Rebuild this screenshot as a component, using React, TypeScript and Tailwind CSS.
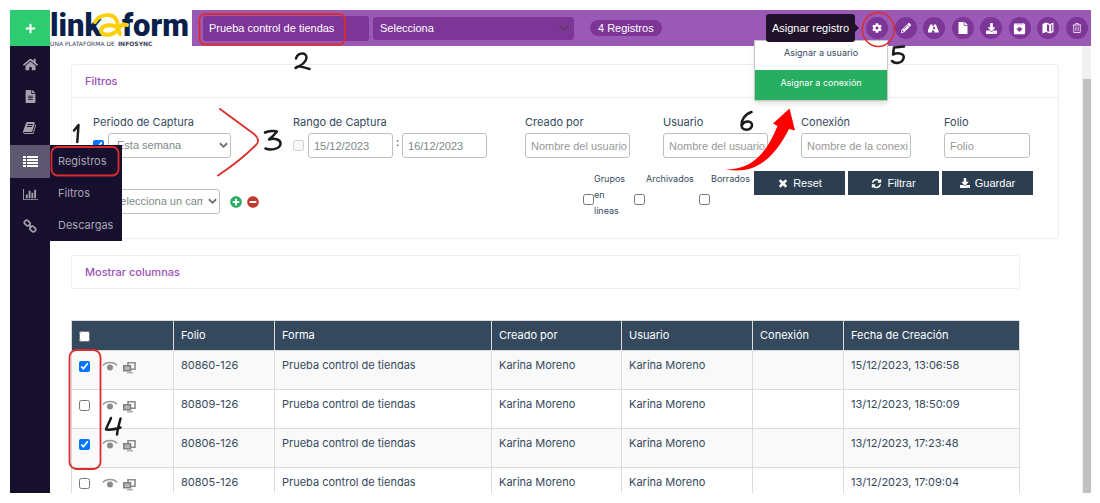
import React from "react";
import type { ReactNode } from "react";
import { FaCog, FaPencilAlt, FaFile, FaDownload, FaHome, FaFileAlt, FaPlus, FaPlusCircle, FaMinusCircle, FaChevronDown, FaRegTrashAlt } from "react-icons/fa";
import { MdArchive } from "react-icons/md";

type GlyphProps = { d: string; box?: string; className: string };

function Glyph({ d, box = "0 0 1792 1792", className }: GlyphProps) {
  return (
    <svg viewBox={box} className={className} fill="currentColor" aria-hidden="true">
      <path d={d} />
    </svg>
  );
}

const BOOK =
  "M1639 478q40 57 18 129l-275 906q-19 64-76.5 107.5t-122.5 43.5h-923q-77 0-148.5-53.5t-99.5-131.5q-24-67-2-127 0-4 3-27t4-37q1-8-3-21.5t-3-19.5q2-11 8-21t16.5-23.5 16.5-23.5q23-38 45-91.5t30-91.5q3-10 .5-30t-.5-28q3-11 17-28t17-23q21-36 42-92t25-90q1-9-2.5-32t.5-28q4-13 22-30.5t22-22.5q19-26 42.5-84.5t27.5-96.5q1-8-3-25.5t-2-26.5q2-8 9-18t18-23 17-21q8-12 16.5-30.5t15-35 16-36 19.5-32 26.5-23.5 36-11.5 47.5 5.5l-1 3q38-9 51-9h761q74 0 114 56t18 130l-274 906q-36 119-71.5 153.5t-128.5 34.5h-869q-27 0-38 15-11 16-1 43 24 70 144 70h923q29 0 56-15.5t35-41.5l300-987q7-22 5-57 38 15 59 43zm-1064 2q-4 13 2 22.5t20 9.5h608q13 0 25.5-9.5t16.5-22.5l21-64q4-13-2-22.5t-20-9.5h-608q-13 0-25.5 9.5t-16.5 22.5zm-83 256q-4 13 2 22.5t20 9.5h608q13 0 25.5-9.5t16.5-22.5l21-64q4-13-2-22.5t-20-9.5h-608q-13 0-25.5 9.5t-16.5 22.5z";
const REFRESH =
  "M1639 1056q0 5-1 7-64 268-268 434.5t-478 166.5q-146 0-282.5-55t-243.5-157l-129 129q-19 19-45 19t-45-19-19-45v-448q0-26 19-45t45-19h448q26 0 45 19t19 45-19 45l-137 137q71 66 161 102t187 36q134 0 250-65t186-179q11-17 53-117 8-23 30-23h192q13 0 22.5 9.5t9.5 22.5zm25-800v448q0 26-19 45t-45 19h-448q-26 0-45-19t-19-45 19-45l138-138q-148-137-349-137-134 0-250 65t-186 179q-11 17-53 117-8 23-30 23h-199q-13 0-22.5-9.5t-9.5-22.5v-7q65-268 270-434.5t480-166.5q146 0 284 55.5t245 156.5l130-129q19-19 45-19t45 19 19 45z";
const TIMES =
  "M1490 1322q0 40-28 68l-136 136q-28 28-68 28t-68-28l-294-294-294 294q-28 28-68 28t-68-28l-136-136q-28-28-28-68t28-68l294-294-294-294q-28-28-28-68t28-68l136-136q28-28 68-28t68 28l294 294 294-294q28-28 68-28t68 28l136 136q28 28 28 68t-28 68l-294 294 294 294q28 28 28 68z";
const CHART =
  "M640 896v512h-256v-512h256zm384-512v1024h-256v-1024h256zm1024 1152v128h-2048v-1536h128v1408h1920zm-640-896v768h-256v-768h256zm384-384v1152h-256v-1152h256z";
const ROAD =
  "M1111 1061v-4l-24-320q-1-13-11-22.5t-23-9.5h-186q-13 0-23 9.5t-11 22.5l-24 320v4q-1 12 8 20t21 8h244q12 0 21-8t8-20zm622 467q0 73-46 73h-704q13 0 22-9.5t8-22.5l-20-256q-1-13-11-22.5t-23-9.5h-272q-13 0-23 9.5t-11 22.5l-20 256q-1 13 8 22.5t22 9.5h-704q-46 0-46-73 0-54 26-116l417-1044q8-19 26-33t38-14h339q-13 0-23 9.5t-11 22.5l-15 192q-1 14 8 23t22 9h166q13 0 22-9t8-23l-15-192q-1-13-11-22.5t-23-9.5h339q20 0 38 14t26 33l417 1044q26 62 26 116z";
const LIST = "M0 0h3v2H0zM4 0h11v2H4zM0 3h3v2H0zM4 3h11v2H4zM0 6h3v2H0zM4 6h11v2H4zM0 9h3v2H0zM4 9h11v2H4z";

const FIELD =
  "h-[25px] w-full rounded-[3px] border border-[#bfbfbf] bg-white pr-px pl-[5px] font-['Liberation_Sans',sans-serif] text-[11px] text-[#7b8a8b] placeholder:text-[#999]";
const SELECT =
  "h-[25px] w-full appearance-none rounded-[3px] border border-[#bfbfbf] bg-white pr-[16px] font-['Liberation_Sans',sans-serif] text-[11px] text-[#7b8a8b]";

function SmallChevron() {
  return (
    <svg viewBox="0 0 10 7" className="pointer-events-none absolute top-[9px] right-[3px] h-[7px] w-[9px]" fill="none" stroke="#6b6b6b" strokeWidth="2">
      <path d="M1 1l4 4 4-4" />
    </svg>
  );
}

function Field({ id, label, placeholder, className }: { id: string; label: string; placeholder: string; className: string }) {
  return (
    <div className={className}>
      <label htmlFor={id} className="block h-[19px] leading-[16px]">{label}</label>
      <input id={id} placeholder={placeholder} className={FIELD} />
    </div>
  );
}

function NavItem({ label, active, children }: { label: string; active?: boolean; children: ReactNode }) {
  return (
    <a
      href="#"
      aria-label={label}
      className={active ? "mt-px flex h-[33px] items-center justify-center bg-[#5d5870] text-white" : "flex h-[32px] items-center justify-center text-[#a5a2ad]"}
    >
      {children}
    </a>
  );
}

function Tool({ label, children }: { label: string; children: ReactNode }) {
  return (
    <button aria-label={label} className="flex size-[22px] shrink-0 items-center justify-center rounded-full bg-[#7d3598] text-white">
      {children}
    </button>
  );
}

function ChainIcon() {
  return (
    <svg viewBox="0 0 14 14" className="size-[14px]" fill="none" stroke="currentColor" strokeWidth="1.7" aria-hidden="true">
      <rect x="1.2" y="1.8" width="6" height="4.4" rx="2" transform="rotate(45 4.2 4)" />
      <rect x="6.8" y="7.8" width="6" height="4.4" rx="2" transform="rotate(45 9.8 10)" />
      <path d="M5.6 5.4l2.8 3.2" />
    </svg>
  );
}

function MapIcon() {
  return (
    <svg viewBox="0 0 12 12" className="size-[12px]" aria-hidden="true">
      <path d="M.5 2L4 .6 8 2l3.5-1.4V10L8 11.4 4 10 .5 11.4z" fill="#fff" />
      <path d="M5 2.2l2.2.8v6.9L5 9.1zM9.2 2.7l1.1-.4v6.9l-1.1.4z" fill="#7d3598" />
    </svg>
  );
}

function Logo() {
  return (
    <div role="img" aria-label="linkaform" className="relative flex h-[37px] w-[142px] shrink-0 flex-col bg-white text-[#0b1f4b]">
      <div className="flex h-[30px] justify-between pr-[3px] font-['Roboto',sans-serif] text-[31px] leading-[32px] font-black">
        <span>link</span>
        <span>form</span>
      </div>
      <svg viewBox="0 0 44 30" className="absolute top-0 left-[38px] h-[30px] w-[44px]" fill="none" stroke="#ffcf0a" strokeWidth="4" strokeLinecap="round" aria-hidden="true">
        <path d="M7 12C12 4 25 2 29 11C30 15 30 20 32 24" />
        <path d="M29 17C23 14 14 15 13 20C13 27 26 26 30 19C32 15 35 14 39 15" />
      </svg>
      <div className="flex gap-[3px] font-['DejaVu_Sans',sans-serif] text-[6px] leading-[7px] whitespace-nowrap text-[#39425c]">
        <span>UNA PLATAFORMA DE</span>
        <b>INFOSYNC</b>
      </div>
    </div>
  );
}

function RowIcons() {
  return (
    <span className="flex items-center gap-[5px]">
      <svg viewBox="0 0 16 12" className="h-[12px] w-[16px]" fill="none" aria-hidden="true">
        <path d="M1 4.5C4 .6 12 .6 15 4.5" stroke="#999" strokeWidth="1.5" />
        <circle cx="8" cy="6.5" r="3" fill="#8a8a8a" />
      </svg>
      <svg viewBox="0 0 13 12" className="mt-[3px] h-[12px] w-[13px]" aria-hidden="true">
        <path d="M5 .8h7v6.400H5z" fill="#fff" stroke="#8a8a8a" strokeWidth="1.6" />
        <path d="M.8 3.800h6.700v5H.8z" fill="#b5b5b5" stroke="#808080" strokeWidth="1.6" />
        <path d="M4 10h6v1.500H4z" fill="#b0b0b0" />
      </svg>
    </span>
  );
}

const ROWS = [
  { folio: "80860-126", date: "15/12/2023, 13:06:58", on: true },
  { folio: "80809-126", date: "13/12/2023, 18:50:09", on: false },
  { folio: "80806-126", date: "13/12/2023, 17:23:48", on: true },
  { folio: "80805-126", date: "13/12/2023, 17:09:04", on: false },
];

const CELL = "border border-[#dcdcdc] px-[7px] pt-[8px] align-top font-normal";

function Annotations() {
  return (
    <svg viewBox="0 0 1100 503" className="pointer-events-none absolute top-0 left-0 z-30 h-[503px] w-[1100px]" fill="none" strokeLinecap="round" strokeLinejoin="round" aria-hidden="true">
      <g stroke="#dc2c2c" strokeWidth="1.8">
        <rect x="199.5" y="14" width="145.5" height="30.5" rx="6" />
        <rect x="51.5" y="147" width="67" height="28.5" rx="6" />
        <rect x="69.5" y="350" width="31" height="119" rx="7" />
        <ellipse cx="878.3" cy="29.5" rx="16" ry="17" strokeWidth="1.5" />
        <path d="M220 109L254 134Q261 140 256 145Q240 161 218 175.5" />
      </g>
      <g stroke="#1b1b1b" strokeWidth="2.5">
        <path d="M74 130.5L78.5 125L77.3 142" />
        <path d="M296 58.5C298 52 307 52 306.5 58C306 63 300 66 295.5 68C299 64.5 303 67.5 309.5 69" />
        <path d="M265 132.5C269 131 275 130.5 277 131.5C275 134 272 137 269 139.5C275 137.5 281 140 280.5 144C280 149 271 150.5 265.5 148.5" />
        <path d="M111 418C109 423 106.5 427 106 429.5C111 430 116 429 120.5 427.5M120.5 418.5C119 424 117.5 430 117 434.5" />
        <path d="M904 46.5L894 47.5L893 54.5C899 52 905 54 903.5 58.5C902 63.5 895 64 892 61" />
        <path d="M751.5 112C745 114 741 120 741.5 125.5C742 131 751 131 752 125.5C752.5 120.5 744.5 120 742 125" />
      </g>
      <path d="M725.5 169.5C752 169.5 766 154 777.5 126L773 123.5L789.5 108.500L795 130.500L789 129C774 158 756 175 725.5 169.5z" fill="#f00" />
    </svg>
  );
}

export default function App() {
  return (
    <div className="relative h-screen overflow-hidden bg-white py-[10px] pr-[9px] pl-[10px] font-['Inter',sans-serif] text-[11px] text-[#34495e]">
      <div className="flex h-full">
        <aside className="relative z-20 w-[40px] shrink-0 bg-[#170f2e]">
          <button aria-label="Nuevo" className="flex h-[36px] w-full items-center justify-center bg-[#2ecc71] text-white">
            <FaPlus className="size-[11px]" />
          </button>
          <nav className="pt-[2px]">
            <NavItem label="Inicio"><FaHome className="size-[15px]" /></NavItem>
            <NavItem label="Formas"><FaFileAlt className="size-[13px]" /></NavItem>
            <NavItem label="Catálogos"><Glyph d={BOOK} className="size-[14px]" /></NavItem>
            <NavItem label="Registros" active><Glyph d={LIST} box="0 0 15 11" className="h-[11px] w-[15px]" /></NavItem>
            <NavItem label="Reportes"><Glyph d={CHART} box="0 0 2048 1792" className="h-[13px] w-[15px]" /></NavItem>
            <NavItem label="Enlaces"><ChainIcon /></NavItem>
          </nav>
          <nav className="absolute top-[135px] left-[40px] flex w-[72px] flex-col bg-[#170f2e] text-[#a9a6b3]">
            <a href="#" className="flex h-[32px] items-center pl-[8px]">Registros</a>
            <a href="#" className="flex h-[32px] items-center pl-[8px]">Filtros</a>
            <a href="#" className="flex h-[32px] items-center pl-[8px]">Descargas</a>
          </nav>
        </aside>

        <div className="flex min-w-0 flex-1 flex-col">
          <header className="flex h-[36px] shrink-0 font-['Liberation_Sans',sans-serif]">
            <Logo />
            <div className="flex min-w-0 flex-1 items-center bg-[#9b59b6] pr-[3px] pl-[11px] text-white">
              <input aria-label="Forma" defaultValue="Prueba control de tiendas" className="h-[25px] w-[166px] rounded-[3px] bg-[#7d3598] px-[6px]" />
              <div className="relative ml-[4px] h-[23px] w-[201px]">
                <select aria-label="Filtro guardado" className="h-full w-full appearance-none rounded-[3px] bg-[#7d3598] px-[7px]">
                  <option>Selecciona</option>
                </select>
                <FaChevronDown className="pointer-events-none absolute top-[5px] right-[4px] size-[12px] text-[#5f3d6b]" />
              </div>
              <span className="ml-[16px] rounded-full bg-[#7d3598] px-[8px] leading-[16px]">4 Registros</span>
              <div className="ml-auto flex w-[222px] justify-between">
                <div className="relative">
                  <Tool label="Asignar registro"><FaCog className="size-[10px]" /></Tool>
                  <div role="menu" className="absolute top-[23px] right-0 z-10 flex w-[134px] flex-col border border-[#c8c8c8] bg-white text-center font-['Inter',sans-serif] text-[9px] text-[#34495e] shadow-md">
                    <button role="menuitem" className="h-[29px] pb-[5px]">Asignar a usuario</button>
                    <button role="menuitem" className="h-[30px] bg-[#27ae60] pb-[5px] text-white">Asignar a conexión</button>
                  </div>
                  <div role="tooltip" className="absolute top-[-3px] right-[33px] z-10 h-[28px] w-[89px] rounded-[3px] bg-[#20122a] text-center leading-[28px] whitespace-nowrap">
                    Asignar registro
                    <span className="absolute top-[10px] left-full border-4 border-transparent border-l-[#20122a]" />
                  </div>
                </div>
                <Tool label="Editar"><FaPencilAlt className="size-[10px]" /></Tool>
                <Tool label="Ruta"><Glyph d={ROAD} box="0 0 1920 1792" className="size-[12px]" /></Tool>
                <Tool label="Documento"><FaFile className="size-[12px]" /></Tool>
                <Tool label="Descargar"><FaDownload className="size-[11px]" /></Tool>
                <Tool label="Archivar"><MdArchive className="size-[15px]" /></Tool>
                <Tool label="Mapa"><MapIcon /></Tool>
                <Tool label="Borrar"><FaRegTrashAlt className="size-[10px] opacity-80" /></Tool>
              </div>
            </div>
          </header>

          <div className="flex min-h-0 flex-1">
            <main className="min-w-0 flex-1 overflow-hidden pt-[18px] pr-[23px] pl-[21px]">
              <section className="h-[175px] rounded-[3px] border border-[#eee]">
                <h2 className="h-[33px] border-b border-[#eee] pl-[13px] leading-[33px] font-medium text-[#9b4fb8]">Filtros</h2>
                <div className="flex pt-[16px] pr-[28px] pl-[21px]">
                  <div className="w-[138px]">
                    <label htmlFor="period" className="block h-[19px] leading-[16px]">Periodo de Captura</label>
                    <div className="flex items-center gap-[4px]">
                      <input type="checkbox" aria-label="Usar periodo" defaultChecked className="size-[11px] shrink-0" />
                      <div className="relative flex-1">
                        <select id="period" className={SELECT + " pl-[8px]"}><option>Esta semana</option></select>
                        <SmallChevron />
                      </div>
                    </div>
                  </div>
                  <div className="ml-[62px] w-[194px]">
                    <label htmlFor="from" className="block h-[19px] leading-[16px]">Rango de Captura</label>
                    <div className="flex items-center">
                      <input type="checkbox" disabled aria-label="Usar rango" className="mr-[4px] size-[11px] shrink-0" />
                      <input id="from" defaultValue="15/12/2023" className={FIELD} />
                      <span className="px-[3px] pb-[6px]">:</span>
                      <input aria-label="Hasta" defaultValue="16/12/2023" className={FIELD} />
                    </div>
                  </div>
                  <Field id="creator" label="Creado por" placeholder="Nombre del usuario" className="ml-auto w-[105px]" />
                  <Field id="user" label="Usuario" placeholder="Nombre del usuario" className="ml-[33px] w-[105px]" />
                  <Field id="conn" label="Conexión" placeholder="Nombre de la conexi" className="ml-[33px] w-[110px]" />
                  <Field id="folio" label="Folio" placeholder="Folio" className="ml-[33px] w-[86px]" />
                </div>
                <div className="flex items-start pt-[13px] pr-[25px]">
                  <div className="mt-[18px] flex h-[25px] items-center pl-[38px]">
                    <div className="relative w-[110px]">
                      <select aria-label="Campo" className={SELECT + " pl-[2px]"}><option>Selecciona un campo</option></select>
                      <SmallChevron />
                    </div>
                    <button aria-label="Agregar" className="ml-[10px] text-[#27ae60]"><FaPlusCircle className="size-[12px]" /></button>
                    <button aria-label="Quitar" className="ml-[5px] text-[#c0392b]"><FaMinusCircle className="size-[12px]" /></button>
                  </div>
                  <div className="ml-auto flex text-[9px] leading-[16px]">
                    <div className="flex w-[51px]">
                      <input id="groups" type="checkbox" className="mt-[23px] size-[11px] shrink-0" />
                      <label htmlFor="groups" className="w-[36px]">Grupos en líneas</label>
                    </div>
                    <div className="flex w-[65px] flex-col">
                      <label htmlFor="archived" className="pl-[12px]">Archivados</label>
                      <input id="archived" type="checkbox" className="mt-[7px] size-[11px]" />
                    </div>
                    <div className="flex w-[55px] flex-col">
                      <label htmlFor="deleted" className="pl-[12px]">Borrados</label>
                      <input id="deleted" type="checkbox" className="mt-[7px] size-[11px]" />
                    </div>
                  </div>
                  <div className="flex h-[24px] gap-[3px] font-['Liberation_Sans',sans-serif] text-white">
                    <button className="flex w-[91px] items-center justify-center gap-[4px] bg-[#2c3e50]"><Glyph d={TIMES} className="size-[12px]" />Reset</button>
                    <button className="flex w-[91px] items-center justify-center gap-[5px] bg-[#2c3e50]"><Glyph d={REFRESH} className="size-[11px]" />Filtrar</button>
                    <button className="flex w-[91px] items-center justify-center gap-[5px] bg-[#2c3e50]"><FaDownload className="size-[10px]" />Guardar</button>
                  </div>
                </div>
              </section>

              <div className="pr-[39px]">
                <section className="mt-[16px] h-[34px] rounded-[3px] border border-[#eee] pl-[13px] leading-[32px] font-medium text-[#9b4fb8]">
                  Mostrar columnas
                </section>
                <table className="mt-[31px] w-full table-fixed border-collapse leading-[12px]">
                  <colgroup>
                    <col className="w-[102px]" />
                    <col className="w-[101px]" />
                    <col className="w-[217px]" />
                    <col className="w-[130px]" />
                    <col className="w-[131px]" />
                    <col className="w-[91px]" />
                    <col />
                  </colgroup>
                  <thead>
                    <tr className="h-[30px] bg-[#34495e] text-left text-white">
                      <th className={CELL}><input type="checkbox" aria-label="Seleccionar todo" className="mt-[2px] block size-[11px]" /></th>
                      {["Folio", "Forma", "Creado por", "Usuario", "Conexión", "Fecha de Creación"].map((h) => (
                        <th key={h} className={CELL}>{h}</th>
                      ))}
                    </tr>
                  </thead>
                  <tbody>
                    {ROWS.map((r) => (
                      <tr key={r.folio} className="h-[39px] odd:bg-[#f9f9f9]">
                        <td className={CELL}>
                          <div className="flex items-center gap-[12px]">
                            <input type="checkbox" aria-label={r.folio} defaultChecked={r.on} className="size-[11px]" />
                            <RowIcons />
                          </div>
                        </td>
                        <td className={CELL}>{r.folio}</td>
                        <td className={CELL}>Prueba control de tiendas</td>
                        <td className={CELL}>Karina Moreno</td>
                        <td className={CELL}>Karina Moreno</td>
                        <td className={CELL}></td>
                        <td className={CELL}>{r.date}</td>
                      </tr>
                    ))}
                  </tbody>
                </table>
              </div>
            </main>
            <div className="w-[9px] shrink-0 bg-[#f1f1f1] pt-[33px] pl-px">
              <div className="h-full bg-[#c1c1c1]" />
            </div>
          </div>
        </div>
      </div>
      <Annotations />
    </div>
  );
}
